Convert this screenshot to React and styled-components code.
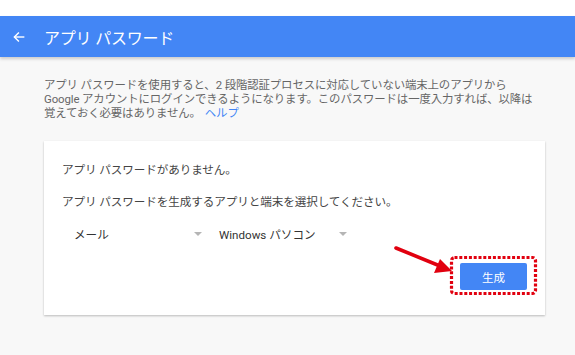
import React from "react";
import styled, { createGlobalStyle } from "styled-components";

const Global = createGlobalStyle`
  html, body { margin: 0; padding: 0; background: #f8f8f8; }
  body { font-family: Roboto, "Noto Sans CJK JP", sans-serif; width: 575px; height: 355px; overflow: hidden; }
`;

const TopStrip = styled.div`
  height: 16px;
  background: #ffffff;
`;

const Header = styled.header`
  height: 41px;
  background: #4386f5;
  display: flex;
  align-items: center;
  box-shadow: 0 2px 3px rgba(0, 0, 0, 0.18);
  position: relative;
  z-index: 1;
`;

const BackButton = styled.span`
  width: 44px;
  display: flex;
  justify-content: center;
  padding-right: 6px;
  box-sizing: border-box;
  padding-top: 1px;
`;

const Title = styled.h1`
  margin: 0;
  font-size: 16px;
  font-weight: 400;
  color: #ffffff;
  letter-spacing: -0.2px;
`;

const Main = styled.main`
  padding: 21px 20px 0 44px;
`;

const Intro = styled.p`
  margin: 0;
  font-size: 11.4px;
  line-height: 14px;
  color: #666666;
  letter-spacing: -0.1px;
  white-space: nowrap;
`;

const Link = styled.a`
  color: #4386f5;
  text-decoration: none;
  margin-left: 4px;
`;

const Card = styled.section`
  margin: 21px 0 0 0;
  width: 501px;
  background: #ffffff;
  box-shadow: 0 1px 2px rgba(0, 0, 0, 0.25);
  padding: 22px 18px 25px 18px;
  box-sizing: border-box;
  display: flex;
  flex-direction: column;
`;

const CardText = styled.p`
  margin: 0 0 ${(p) => p.$gap}px 0;
  font-size: 11.6px;
  line-height: 14px;
  color: #444444;
  letter-spacing: -0.1px;
`;

const SelectRow = styled.div`
  display: flex;
  gap: 2px;
  height: 24px;
  align-items: center;
`;

const Select = styled.div`
  width: 143px;
  display: flex;
  align-items: center;
  justify-content: space-between;
  padding: 0 3px 0 12px;
  box-sizing: border-box;
  font-size: 11.6px;
  color: #333333;
`;

const Caret = styled.span`
  width: 0;
  height: 0;
  border-left: 4px solid transparent;
  border-right: 4px solid transparent;
  border-top: 4px solid #b5b5b5;
`;

const ButtonRow = styled.div`
  display: flex;
  justify-content: flex-end;
  margin-top: 17px;
`;

const ButtonWrap = styled.div`
  position: relative;
`;

const Button = styled.button`
  width: 67px;
  height: 27px;
  border: none;
  border-radius: 2px;
  background: #4386f5;
  color: #ffffff;
  font-family: inherit;
  font-size: 11.5px;
  padding: 0;
  cursor: pointer;
`;

const Frame = styled.svg`
  position: absolute;
  left: -10px;
  top: -7px;
  width: 87px;
  height: 39px;
  overflow: visible;
  pointer-events: none;
`;

const Pointer = styled.svg`
  position: absolute;
  left: -66px;
  top: -17px;
  width: 60px;
  height: 30px;
  overflow: visible;
  pointer-events: none;
`;

export default function App() {
  return (
    <>
      <Global />
      <TopStrip />
      <Header>
        <BackButton>
          <svg width="14" height="14" viewBox="0 0 24 24" fill="none" stroke="#fff" strokeWidth="2.4" strokeLinecap="square">
            <path d="M20 12H5" />
            <path d="M11 5l-7 7 7 7" />
          </svg>
        </BackButton>
        <Title>アプリ パスワード</Title>
      </Header>
      <Main>
        <Intro>
          アプリ パスワードを使用すると、2 段階認証プロセスに対応していない端末上のアプリから
          <br />
          Google アカウントにログインできるようになります。このパスワードは一度入力すれば、以降は
          <br />
          覚えておく必要はありません。
          <Link href="#">ヘルプ</Link>
        </Intro>
        <Card>
          <CardText $gap={18}>アプリ パスワードがありません。</CardText>
          <CardText $gap={13}>アプリ パスワードを生成するアプリと端末を選択してください。</CardText>
          <SelectRow>
            <Select>
              メール
              <Caret />
            </Select>
            <Select>
              Windows パソコン
              <Caret />
            </Select>
          </SelectRow>
          <ButtonRow>
            <ButtonWrap>
              <Button>生成</Button>
              <Frame viewBox="0 0 87 39">
                <rect x="1.5" y="1.5" width="84" height="36" rx="3" fill="none" stroke="#e1000f" strokeWidth="3.2" strokeDasharray="3 1.8" />
              </Frame>
              <Pointer viewBox="0 0 60 30">
                <line x1="2" y1="2" x2="46" y2="20" stroke="#e1000f" strokeWidth="3.6" strokeLinecap="round" />
                <polygon points="58,25 40,27 46,13" fill="#e1000f" />
              </Pointer>
            </ButtonWrap>
          </ButtonRow>
        </Card>
      </Main>
    </>
  );
}
